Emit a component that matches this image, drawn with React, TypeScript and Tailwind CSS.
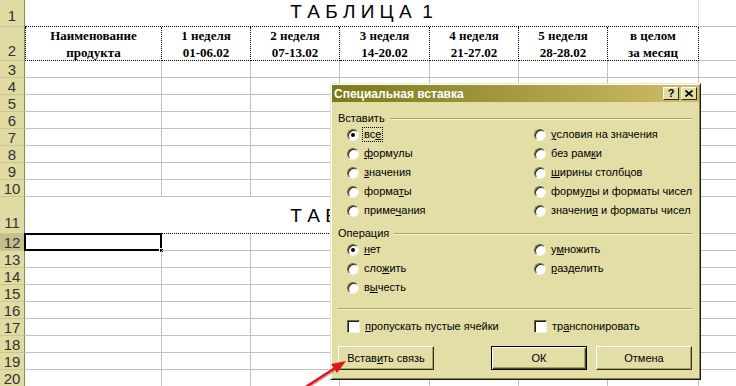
import React from 'react'

const colW = ['w-[137px]', 'w-[89px]', 'w-[89px]', 'w-[90px]', 'w-[89px]', 'w-[89px]', 'w-[91px]']

const heads = [
  ['Наименование', 'продукта'],
  ['1 неделя', '01-06.02'],
  ['2 неделя', '07-13.02'],
  ['3 неделя', '14-20.02'],
  ['4 неделя', '21-27.02'],
  ['5 неделя', '28-28.02'],
  ['в целом', 'за месяц'],
]

function Head({ n, className = '', active = false }: { n: number; className?: string; active?: boolean }) {
  return (
    <div
      className={`w-[25px] shrink-0 flex justify-center border-r border-b border-r-[#8c8858] border-b-[#cbc794] text-[15px] leading-none text-[#333] ${
        active ? 'bg-[#c3bf8c]' : 'bg-[#dfdba3]'
      } ${className}`}
    >
      {n}
    </div>
  )
}

function PlainRow({ n, active = false }: { n: number; active?: boolean }) {
  return (
    <div className="flex h-[17px]">
      <Head n={n} className="items-center" active={active} />
      {colW.map((w, i) => (
        <div key={i} className={`${w} shrink-0 relative border-r border-b border-[#c0c0c0]`}>
          {active && i === 0 && (
            <>
              <div className="absolute -left-[1px] -top-[1px] -right-[1px] -bottom-[1px] border-2 border-black" />
              <div className="absolute -right-[3px] -bottom-[3px] w-[5px] h-[5px] bg-black border border-white" />
            </>
          )}
        </div>
      ))}
      <div className="flex-1 border-b border-[#c0c0c0]" />
    </div>
  )
}

function Title({ n, h, tall }: { n: number; h: string; tall?: boolean }) {
  return (
    <div className={`flex ${h}`}>
      <Head n={n} className="items-end pb-[3px]" />
      <div
        className={`w-[674px] shrink-0 flex justify-center items-center border-r border-r-[#c0c0c0] border-b border-b-black border-dotted ${
          tall ? 'pt-[1px]' : 'pb-[4px]'
        }`}
      >
        <span className="whitespace-pre text-[19px] leading-none text-black font-['Liberation_Sans',Arial,sans-serif]">
          Т А Б Л И Ц А  1
        </span>
      </div>
      <div className="flex-1 border-b border-[#c0c0c0]" />
    </div>
  )
}

function Acc({ t, u }: { t: string; u: number }) {
  return (
    <>
      {t.slice(0, u)}
      <span className="underline underline-offset-[1px]">{t[u]}</span>
      {t.slice(u + 1)}
    </>
  )
}

function Radio({ checked = false }: { checked?: boolean }) {
  return (
    <span className="relative w-[12px] h-[12px] shrink-0 rounded-full bg-white border border-t-[#6e6a40] border-l-[#6e6a40] border-r-[#f4f2dc] border-b-[#f4f2dc] shadow-[inset_1px_1px_0_#202010]">
      {checked && <span className="absolute left-[3px] top-[3px] w-[4px] h-[4px] rounded-full bg-black" />}
    </span>
  )
}

function Opt({ t, u, checked, focus }: { t: string; u: number; checked?: boolean; focus?: boolean }) {
  return (
    <div className="h-[19px] flex items-center pl-[9px] gap-[5px] whitespace-nowrap">
      <Radio checked={checked} />
      <span className={focus ? 'outline outline-1 outline-dotted outline-black px-[1px] -ml-[1px] leading-[13px]' : ''}>
        <Acc t={t} u={u} />
      </span>
    </div>
  )
}

function Check({ t, u }: { t: string; u: number }) {
  return (
    <div className="h-[19px] flex items-center pl-[9px] gap-[5px] whitespace-nowrap">
      <span className="w-[13px] h-[13px] shrink-0 bg-white border border-t-[#6e6a40] border-l-[#6e6a40] border-r-[#f4f2dc] border-b-[#f4f2dc] shadow-[inset_1px_1px_0_#202010]" />
      <span>
        <Acc t={t} u={u} />
      </span>
    </div>
  )
}

function Legend({ t }: { t: string }) {
  return (
    <div className="flex items-center h-[13px]">
      <span>{t}</span>
      <div className="flex-1 ml-[5px] h-[2px] border-t border-t-[#a6a270] border-b border-b-[#f6f4de]" />
    </div>
  )
}

function Btn({ children, def }: { children: React.ReactNode; def?: boolean }) {
  return (
    <div
      className={`w-[96px] h-[24px] flex items-center justify-center bg-[#e2dea6] ${
        def
          ? 'border border-black shadow-[inset_1px_1px_0_#fff,inset_-1px_-1px_0_#4a4828,inset_-2px_-2px_0_#a6a270]'
          : 'border border-t-white border-l-white border-r-[#303018] border-b-[#303018] shadow-[inset_-1px_-1px_0_#a6a270]'
      }`}
    >
      {children}
    </div>
  )
}

function Dialog() {
  return (
    <div className="absolute left-[330px] top-[83px] w-[371px] h-[297px] bg-[#e2dea6] border border-t-[#eeeac4] border-l-[#eeeac4] border-r-[#1c1c0c] border-b-[#1c1c0c] shadow-[inset_1px_1px_0_#fff,inset_-1px_-1px_0_#8a8658] p-[1px] font-['Liberation_Sans',Arial,sans-serif] text-[11px] text-black">
      <div className="h-[17px] flex items-center pl-[2px] pr-[2px] bg-linear-to-r from-[#7a7a16] to-[#d2bc6a]">
        <span className="text-white font-bold text-[12px]">Специальная вставка</span>
        <div className="ml-auto flex gap-[2px]">
          <div className="w-[16px] h-[13px] flex items-center justify-center bg-[#e2dea6] border border-t-white border-l-white border-r-[#303018] border-b-[#303018] font-bold text-[11px] leading-none">
            ?
          </div>
          <div className="w-[16px] h-[13px] flex items-center justify-center bg-[#e2dea6] border border-t-white border-l-white border-r-[#303018] border-b-[#303018]">
            <svg width="8" height="7" viewBox="0 0 8 7">
              <path d="M0.5 0.5 L7.5 6.5 M7.5 0.5 L0.5 6.5" stroke="#000" strokeWidth="1.6" />
            </svg>
          </div>
        </div>
      </div>

      <div className="pl-[6px] pr-[7px]">
        <div className="mt-[10px]">
          <Legend t="Вставить" />
        </div>
        <div className="grid grid-cols-[187px_1fr]">
          <div>
            <Opt t="все" u={2} checked focus />
            <Opt t="формулы" u={0} />
            <Opt t="значения" u={0} />
            <Opt t="форматы" u={5} />
            <Opt t="примечания" u={5} />
          </div>
          <div>
            <Opt t="условия на значения" u={0} />
            <Opt t="без рамки" u={7} />
            <Opt t="ширины столбцов" u={0} />
            <Opt t="формулы и форматы чисел" u={5} />
            <Opt t="значения и форматы чисел" u={7} />
          </div>
        </div>

        <div className="mt-[7px]">
          <Legend t="Операция" />
        </div>
        <div className="grid grid-cols-[187px_1fr]">
          <div>
            <Opt t="нет" u={0} checked />
            <Opt t="сложить" u={3} />
            <Opt t="вычесть" u={1} />
          </div>
          <div>
            <Opt t="умножить" u={1} />
            <Opt t="разделить" u={0} />
          </div>
        </div>

        <div className="mt-[11px] h-[2px] border-t border-t-[#a6a270] border-b border-b-[#f6f4de]" />

        <div className="mt-[7px] grid grid-cols-[187px_1fr]">
          <Check t="пропускать пустые ячейки" u={0} />
          <Check t="транспонировать" u={2} />
        </div>

        <div className="mt-[10px] flex">
          <Btn>
            <span>
              <Acc t="Вставить связь" u={5} />
            </span>
          </Btn>
          <div className="ml-auto flex gap-[9px]">
            <Btn def>ОК</Btn>
            <Btn>Отмена</Btn>
          </div>
        </div>
      </div>
    </div>
  )
}

export default function App() {
  return (
    <div className="relative w-[736px] h-[386px] overflow-hidden bg-white">
      {/* Sheet */}
      <div className="flex flex-col font-['Liberation_Sans',Arial,sans-serif]">
        <Title n={1} h="h-[27px]" />

        <div className="flex h-[34px]">
          <Head n={2} className="items-end pb-[2px]" />
          {colW.map((w, i) => (
            <div
              key={i}
              className={`${w} shrink-0 flex flex-col items-center border-dotted border-black border-r border-b ${
                i === 0 ? 'border-l' : ''
              } ${i === 6 ? 'border-dashed' : ''} font-['Liberation_Serif','Times_New_Roman',serif] font-bold text-[13px] leading-[17px] text-black`}
            >
              <span>{heads[i][0]}</span>
              <span>{heads[i][1]}</span>
            </div>
          ))}
          <div className="flex-1 border-b border-[#c0c0c0]" />
        </div>

        {[3, 4, 5, 6, 7, 8, 9, 10].map((n) => (
          <PlainRow key={n} n={n} />
        ))}

        <Title n={11} h="h-[37px]" tall />

        {[12, 13, 14, 15, 16, 17, 18, 19, 20].map((n) => (
          <PlainRow key={n} n={n} active={n === 12} />
        ))}
      </div>

      <Dialog />

      {/* Arrow pointing at the link button */}
      <svg className="absolute left-0 top-0" width="736" height="386" viewBox="0 0 736 386">
        <line x1="298" y1="392" x2="335" y2="368" stroke="#7a2020" strokeOpacity="0.35" strokeWidth="3" transform="translate(1 1)" />
        <line x1="298" y1="392" x2="335" y2="368" stroke="#e01818" strokeWidth="2.5" />
        <polygon points="346,361 337,373 331,364" fill="#e01818" />
      </svg>
    </div>
  )
}
